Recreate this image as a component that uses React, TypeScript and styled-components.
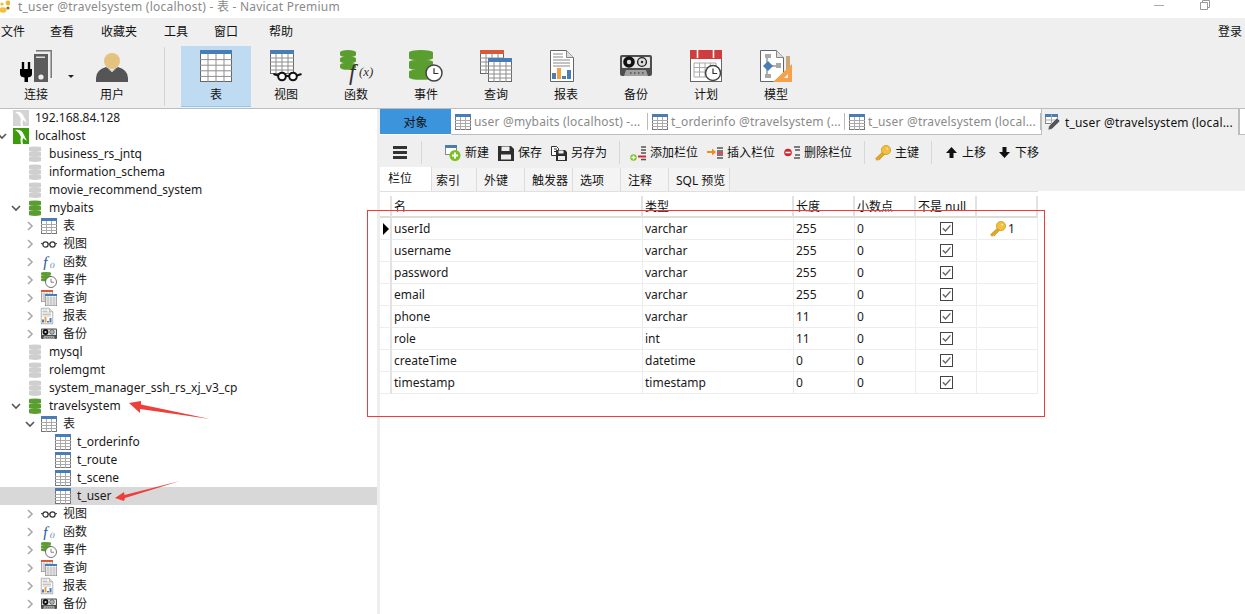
import React from "react";
import styled, { createGlobalStyle } from "styled-components";

const Global = createGlobalStyle`
  html, body { margin: 0; padding: 0; background: #fff; }
  body { font: 12px/16px "Noto Sans", "Noto Sans CJK SC", sans-serif; color: #111; }
  * { box-sizing: border-box; }
`;

const Page = styled.div`
  position: relative;
  width: 1245px;
  height: 614px;
  overflow: hidden;
  display: flex;
  flex-direction: column;
`;
const TitleBar = styled.div`
  height: 18px;
  background: #fff;
  display: flex;
  align-items: flex-start;
`;
const TitleText = styled.span`
  margin-left: 8px;
  font-size: 12px;
  line-height: 13px;
  color: #8a8a8a;
  letter-spacing: 0.22px;
`;
const WindowControls = styled.div`
  margin-left: auto;
  display: flex;
  gap: 36px;
  padding-right: 35px;
`;
const Header = styled.div`
  background: #efefef;
  border-bottom: 1px solid #bdbdbd;
  height: 91px;
`;
const MenuBar = styled.div`
  height: 28px;
  padding: 6px 3px 0 1px;
  display: flex;
`;
const MenuItem = styled.span<{ $w: number }>`
  width: ${(p) => p.$w}px;
`;
const LoginItem = styled.span`
  margin-left: auto;
`;
const Ribbon = styled.div`
  height: 62px;
  display: flex;
`;
const RibbonCell = styled.div<{ $active?: boolean; $w?: number }>`
  position: relative;
  width: ${(p) => p.$w ?? 70}px;
  height: 61px;
  padding-top: 4px;
  display: flex;
  flex-direction: column;
  align-items: center;
  gap: 4px;
  background: ${(p) => (p.$active ? "#bfdbf2" : "transparent")};
  border-bottom: 1px solid ${(p) => (p.$active ? "#90c8f4" : "transparent")};
  line-height: 18px;
`;
const RibbonSep = styled.div`
  width: 1px;
  height: 59px;
  margin: 1px 16px 0 17px;
  background: #d4d4d4;
`;
const Caret = styled.div`
  position: absolute;
  left: 68px;
  top: 29px;
  border-style: solid;
  border-width: 3px 3px 0;
  border-color: #222 transparent transparent;
`;
const ConnectGap = styled.div`
  width: 5px;
`;
const Body = styled.div`
  flex: 1;
  display: flex;
  min-height: 0;
`;
const Tree = styled.div`
  width: 380px;
  border-right: 3px solid #eee;
  overflow: hidden;
`;
const TreeRow = styled.div<{ $selected?: boolean }>`
  height: 18px;
  display: flex;
  align-items: center;
  background: ${(p) => (p.$selected ? "#d8d8d8" : "transparent")};
  white-space: nowrap;
`;
const ChevronSlot = styled.div<{ $level: number }>`
  width: 17px;
  margin-left: ${(p) => p.$level * 14 - 3}px;
  margin-right: -1px;
  flex: none;
  display: flex;
`;
const TreeLabel = styled.span`
  margin-left: 6px;
  color: #1a1a1a;
`;
const Right = styled.div`
  flex: 1;
  min-width: 0;
  display: flex;
  flex-direction: column;
`;
const TabStrip = styled.div`
  height: 26px;
  display: flex;
  background: #fff;
`;
const ObjectTab = styled.div`
  width: 71px;
  height: 25px;
  padding-top: 2px;
  background: #3c94dd;
  display: flex;
  align-items: center;
  justify-content: center;
`;
const DocTab = styled.div<{ $w: number }>`
  width: ${(p) => p.$w}px;
  height: 26px;
  padding: 1px 0 0 4px;
  display: flex;
  align-items: center;
  gap: 3px;
  color: #8a8a8a;
  border-bottom: 1px solid #bdbdbd;
  white-space: nowrap;
  position: relative;
  letter-spacing: 0.18px;
  &::after {
    content: "";
    position: absolute;
    right: 0;
    top: 4px;
    height: 17px;
    width: 1px;
    background: #bbb;
  }
`;
const ActiveTab = styled.div`
  width: 199px;
  height: 26px;
  background: #efefef;
  border-left: 1px solid #bdbdbd;
  border-right: 2px solid #bdbdbd;
  padding: 1px 0 0 3px;
  display: flex;
  align-items: center;
  gap: 3px;
  color: #111;
  white-space: nowrap;
  letter-spacing: 0.18px;
`;
const TabFill = styled.div`
  flex: 1;
  border-bottom: 1px solid #bdbdbd;
`;
const Toolbar = styled.div`
  height: 32px;
  background: #efefef;
  display: flex;
  align-items: center;
  padding: 3px 0 0 13px;
`;
const Burger = styled.div`
  width: 14px;
  height: 13px;
  border-top: 3px solid #333;
  border-bottom: 3px solid #333;
  position: relative;
  &::after {
    content: "";
    position: absolute;
    left: 0;
    right: 0;
    top: 2px;
    height: 3px;
    background: #333;
  }
`;
const ToolSep = styled.div<{ $l: number; $r: number }>`
  width: 1px;
  height: 23px;
  background: #d8d8d8;
  margin-left: ${(p) => p.$l}px;
  margin-right: ${(p) => p.$r}px;
`;
const ToolButton = styled.div<{ $w: number }>`
  width: ${(p) => p.$w}px;
  flex: none;
  display: flex;
  align-items: center;
  gap: 4px;
  white-space: nowrap;
`;
const SubTabs = styled.div`
  height: 24px;
  background: #efefef;
  display: flex;
  align-items: flex-end;
`;
const SubTab = styled.div<{ $w: number; $pad: number; $active?: boolean }>`
  width: ${(p) => p.$w}px;
  height: ${(p) => (p.$active ? 24 : 23)}px;
  padding-left: ${(p) => p.$pad}px;
  padding-top: ${(p) => (p.$active ? 0 : 2)}px;
  display: flex;
  align-items: center;
  background: ${(p) => (p.$active ? "#fff" : "#f4f4f4")};
  border-right: 1px solid #dcdcdc;
  white-space: nowrap;
`;
const Grid = styled.div`
  padding-top: 4px;
  display: grid;
  grid-template-columns: 12px 251px 151px 61px 61px 61px 61px;
  width: 658px;
  border-top: 1px solid #e0e0e0;
`;
const HeadCell = styled.div`
  height: 22px;
  padding-left: 2px;
  line-height: 22px;
  border-right: 2px solid #e2e2e2;
  border-bottom: 2px solid #dcdcdc;
  white-space: nowrap;
  overflow: hidden;
`;
const Cell = styled.div`
  height: 22px;
  padding-left: 2px;
  line-height: 21px;
  border-right: 1px solid #ededed;
  border-bottom: 1px solid #ededed;
  white-space: nowrap;
  color: #1a1a1a;
`;
const MarkerCell = styled(Cell)`
  padding: 5px 0 0 3px;
  border-right: 2px solid #e2e2e2;
`;
const RowPointer = styled.div`
  width: 0;
  height: 0;
  border-style: solid;
  border-width: 6px 0 6px 6px;
  border-color: transparent transparent transparent #000;
`;
const CheckCell = styled(Cell)`
  padding: 0;
  display: flex;
  align-items: center;
  justify-content: center;
`;
const CheckBox = styled.div`
  width: 13px;
  height: 13px;
  border: 1px solid #444;
  background: #fff;
  display: flex;
  align-items: center;
  justify-content: center;
`;
const KeyCell = styled(Cell)`
  padding: 0 0 0 13px;
  display: flex;
  align-items: center;
  gap: 2px;
`;
const RedBox = styled.div`
  position: absolute;
  left: 367px;
  top: 210px;
  width: 678px;
  height: 207px;
  border: 1px solid #f03b3b;
  pointer-events: none;
`;
const ArrowLayer = styled.svg`
  position: absolute;
  left: 0;
  top: 0;
  pointer-events: none;
`;

type IconProps = { size?: number };
const Ic = ({ size = 32, children }: IconProps & { children: React.ReactNode }) => (
  <svg width={size} height={size} viewBox="0 0 32 32" style={{ flex: "none", overflow: "visible", display: "block" }}>
    {children}
  </svg>
);
const Ic16 = ({ children }: { children: React.ReactNode }) => (
  <svg width={16} height={16} viewBox="0 0 16 16" style={{ flex: "none", display: "block" }}>
    {children}
  </svg>
);

const GridLines = ({ x, y, w, h, color = "#8f8f8f", top = "#4a7db5", topH = 4 }: { x: number; y: number; w: number; h: number; color?: string; top?: string; topH?: number }) => {
  const rows = [1, 2, 3, 4].map((i) => y + topH + ((h - topH) * i) / 5);
  const cols = [1, 2, 3].map((i) => x + (w * i) / 4);
  return (
    <g>
      <rect x={x + 0.5} y={y + 0.5} width={w - 1} height={h - 1} fill="#fff" stroke="#666" />
      {rows.map((r) => <line key={r} x1={x} x2={x + w} y1={r} y2={r} stroke={color} />)}
      {cols.map((c) => <line key={c} x1={c} x2={c} y1={y + topH} y2={y + h} stroke={color} />)}
      <rect x={x} y={y} width={w} height={topH} fill={top} />
    </g>
  );
};

const TableIcon = ({ size }: IconProps) => <Ic size={size}><GridLines x={0} y={0} w={32} h={32} /></Ic>;
const SmallTableIcon = () => (
  <Ic16>
    <rect x=".5" y=".5" width="15" height="15" fill="#fff" stroke="#777" />
    <rect width="16" height="3" fill="#4a7db5" />
    <path d="M0 6.5h16M0 9.5h16M0 12.5h16M5.5 3v13M10.5 3v13" stroke="#aaa" />
  </Ic16>
);
const GlassesShape = ({ x, y }: { x: number; y: number }) => (
  <g transform={`translate(${x} ${y})`} fill="none" stroke="#111" strokeWidth="2">
    <circle cx="9" cy="6" r="3.8" fill="#fff" />
    <circle cx="20" cy="6" r="3.8" fill="#fff" />
    <path d="M13 5.500h3M5 5 0.500 3.500M24 5l4.500-1.500" />
  </g>
);
const ViewIcon = ({ size }: IconProps) => (
  <Ic size={size}>
    <GridLines x={0} y={0} w={24} h={24} />
    <GlassesShape x={3} y={20.5} />
  </Ic>
);
const SmallViewIcon = () => (
  <Ic16>
    <g fill="none" stroke="#333" strokeWidth="1.2">
      <circle cx="4.500" cy="8.500" r="2.600" />
      <circle cx="11.500" cy="8.500" r="2.600" />
      <path d="M7 8h2M2 8 0 7.500M14 8l2-.5" />
    </g>
  </Ic16>
);
const Db = ({ x, y, w, h, color }: { x: number; y: number; w: number; h: number; color: string }) => {
  const band = h / 3;
  return (
    <g fill={color}>
      {[0, 1, 2].map((i) => (
        <g key={i}>
          <rect x={x} y={y + i * band + 2} width={w} height={band - 3.2} rx={1} />
          <ellipse cx={x + w / 2} cy={y + i * band + 2.2} rx={w / 2} ry={2.2} />
          <ellipse cx={x + w / 2} cy={y + (i + 1) * band - 1.4} rx={w / 2} ry={2.2} />
        </g>
      ))}
    </g>
  );
};
const DbIcon = ({ on }: { on?: boolean }) => (
  <Ic size={16}>
    <Db x={4} y={1} w={24} h={30} color={on ? "#5a9e2f" : "#cfcfcf"} />
  </Ic>
);
const FuncText = styled.text`
  font-family: "Liberation Serif", serif;
  font-style: italic;
  fill: #333;
`;
const FuncIcon = () => (
  <Ic size={32}>
    <Db x={0} y={0} w={16} h={19} color="#5a9e2f" />
    <FuncText x={9} y={30} fontSize="23">f</FuncText>
    <FuncText x={19} y={26} fontSize="13">(x)</FuncText>
  </Ic>
);
const SmallFuncText = styled.text`
  font-family: "Liberation Serif", serif;
  font-style: italic;
  fill: #2f5f9e;
`;
const SmallFuncIcon = () => (
  <Ic16>
    <SmallFuncText x={2} y={13.5} fontSize="16">f</SmallFuncText>
    <SmallFuncText x={9} y={13} fontSize="7">()</SmallFuncText>
  </Ic16>
);
const Clock = ({ cx, cy, r }: { cx: number; cy: number; r: number }) => (
  <g>
    <circle cx={cx} cy={cy} r={r} fill="#fff" stroke="#444" strokeWidth="1.5" />
    <path d={`M${cx} ${cy - r * 0.6}V${cy + 0.5}H${cx + r * 0.55}`} fill="none" stroke="#333" strokeWidth="1.2" />
  </g>
);
const EventIcon = () => (
  <Ic size={32}>
    <Db x={-1} y={0} w={24} h={29} color="#5a9e2f" />
    <Clock cx={24} cy={23} r={8} />
  </Ic>
);
const SmallEventIcon = () => (
  <Ic size={16}>
    <Db x={0} y={0} w={20} h={18} color="#5a9e2f" />
    <Clock cx={20} cy={20} r={11} />
  </Ic>
);
const QueryIcon = ({ size }: IconProps) => (
  <Ic size={size}>
    <GridLines x={0} y={0} w={24} h={24} top="#d65a3a" />
    <GridLines x={8} y={8} w={24} h={24} />
  </Ic>
);
const ReportIcon = ({ size }: IconProps) => (
  <Ic size={size}>
    <path d="M.5.5h16l7 7v24H.5z" fill="#fff" stroke="#666" />
    <path d="M16.500.5v7h7" fill="#ddd" stroke="#888" />
    <path d="M3 4h10M3 7h10M3 10h17M3 13h17M3 16h17" stroke="#888" />
    <rect x="2" y="23" width="4" height="6" fill="#4a7db5" />
    <rect x="7" y="18" width="4" height="11" fill="#f2a042" />
    <rect x="12" y="26" width="4" height="3" fill="#4a7db5" />
    <rect x="17" y="20" width="4" height="9" fill="#4a7db5" />
  </Ic>
);
const BackupIcon = ({ size }: IconProps) => (
  <Ic size={size}>
    <rect x="0" y="5" width="32" height="21" rx="2" fill="#4e4e4e" />
    <rect x="2" y="7" width="28" height="11" rx="1" fill="#e4e4e4" />
    <circle cx="9" cy="12" r="5.800" fill="#111" />
    <circle cx="9" cy="12" r="2.200" fill="#ddd" />
    <circle cx="22" cy="12" r="4.400" fill="#ddd" stroke="#222" strokeWidth="1.4" />
    <circle cx="22" cy="12" r="1.200" fill="#222" />
    <path d="M4 26l2-6h20l2 6z" fill="#a0a0a0" />
    <path d="M10 23h1.500M14 23h1.500M18 23h1.500M22 23h1.500" stroke="#222" />
  </Ic>
);
const ScheduleIcon = ({ size }: IconProps) => (
  <Ic size={size}>
    <rect x=".5" y=".5" width="31" height="31" fill="#fff" stroke="#666" />
    <rect width="32" height="9" fill="#cf3d3d" />
    <path d="M7.500 0v8M23.500 0v8" stroke="#fff" strokeWidth="1.6" />
    <path d="M4 13h22v14H4zM4 17.500h22M4 22h22M9.500 13v14M15 13v14M20.500 13v14" fill="none" stroke="#aaa" />
    <Clock cx={23} cy={23} r={7.5} />
  </Ic>
);
const ModelIcon = ({ size }: IconProps) => (
  <Ic size={size}>
    <path d="M.5.5h16l7 7v24H.5z" fill="#fff" stroke="#666" />
    <path d="M16.500.5v7h7" fill="#ddd" stroke="#888" />
    <path d="M7 8v18M7 16h12" stroke="#999" strokeWidth="1.5" />
    <rect x="5" y="4" width="6" height="4" fill="#a8a8a8" />
    <rect x="5" y="24" width="6" height="4" fill="#a8a8a8" />
    <rect x="16" y="13" width="5" height="5" fill="#a8a8a8" />
    <path d="M8 11l5 5-5 5-5-5z" fill="#4a7db5" />
    <rect x="26" y="6" width="4" height="14" fill="#c9a878" />
    <path d="M32 14v18H13z" fill="#f5a04a" />
    <path d="M28 24v4h-4z" fill="#efefef" />
  </Ic>
);
const ConnectIcon = () => (
  <Ic size={32}>
    <path d="M16 .8h15.200V28" fill="none" stroke="#777" strokeWidth="1.5" />
    <rect x="14" y="4" width="14" height="28" fill="#5c5c5c" />
    <rect x="16" y="6.500" width="9" height="1.500" fill="#ddd" />
    <circle cx="21" cy="27" r="2.600" fill="#eee" />
    <path d="M3 12v8M9 12v8" stroke="#000" strokeWidth="2.400" />
    <path d="M0 19h12v5q0 3-4 3.500V32H4.500v-4.500Q0 27 0 24z" fill="#000" />
  </Ic>
);
const UserIcon = () => (
  <Ic size={32}>
    <circle cx="16" cy="11" r="8" fill="#e5c27f" />
    <path d="M0 32v-4q0-8 10-11l6 4 6-4q10 3 10 11v4z" fill="#555" />
    <path d="M12 19l4 3 4-3-4 2z" fill="#fff" />
  </Ic>
);
const MySqlIcon = ({ on }: { on?: boolean }) => (
  <Ic16>
    <rect width="16" height="16" fill={on ? "#3b9d0c" : "#d4d4d4"} />
    <path d="M2 2q7-1 9 5l3 6-4-3q-1 2 0 6H8q-1-5 0-7Q6 4 2 2z" fill="#fff" />
  </Ic16>
);
const Chevron = ({ open }: { open?: boolean }) => (
  <svg width={10} height={10} viewBox="0 0 10 10" style={{ display: "block" }}>
    {open ? (
      <path d="M1 3l4 4 4-4" fill="none" stroke="#555" strokeWidth="1.6" />
    ) : (
      <path d="M3 1l4 4-4 4" fill="none" stroke="#aaa" strokeWidth="1.6" />
    )}
  </svg>
);
const KeyIcon = () => (
  <Ic16>
    <path d="M8 6.500.6 13.500l1.300 2 1.400-1.200 1.100.7 1.200-1.600L10 9z" fill="#e3a725" stroke="#b98410" strokeWidth=".5" />
    <circle cx="11" cy="5" r="4.600" fill="#f3bf3c" stroke="#c4901a" strokeWidth=".7" />
    <circle cx="12.200" cy="3.800" r="1" fill="#fbe7a0" />
  </Ic16>
);
const NewIcon = () => (
  <Ic16>
    <rect x=".5" y=".5" width="11" height="9" fill="#fff" stroke="#888" />
    <rect width="12" height="3" fill="#4a7db5" />
    <circle cx="10" cy="10.500" r="5.500" fill="#7ac11e" />
    <path d="M10 7.500v6M7 10.500h6" stroke="#fff" strokeWidth="2" />
  </Ic16>
);
const SaveIcon = () => (
  <Ic16>
    <path d="M0 1h13l3 3v12H0z" fill="#2e2e2e" />
    <rect x="3.500" y="1.500" width="8" height="4.500" fill="#eee" />
    <rect x="3" y="9.500" width="10" height="5" fill="#eee" />
  </Ic16>
);
const SaveAsIcon = () => (
  <Ic16>
    <path d="M.5 1.500h5l2 2v7h-7z" fill="#fff" stroke="#333" />
    <path d="M3 4h3M3 6.500h3" stroke="#333" />
    <path d="M5 5h9l2 2v9H5z" fill="#2e2e2e" />
    <rect x="7.500" y="5.500" width="5" height="3" fill="#eee" />
    <rect x="7" y="11" width="7" height="4" fill="#eee" />
  </Ic16>
);
const AddColIcon = () => (
  <Ic16>
    <path d="M11 2h5M11 5h5M11 8h5" stroke="#555" strokeWidth="1.6" />
    <path d="M8 11.500h8" stroke="#e0202a" strokeWidth="2" />
    <path d="M11 14.500h5" stroke="#555" strokeWidth="1.6" />
    <circle cx="3.500" cy="12.500" r="3.200" fill="#7ac11e" />
    <path d="M3.500 10.500v4M1.500 12.500h4" stroke="#fff" strokeWidth="1.300" />
  </Ic16>
);
const InsertColIcon = () => (
  <Ic16>
    <path d="M10 3h6M10 6h6M10 10h6M10 13h6" stroke="#555" strokeWidth="1.6" />
    <path d="M0 7h6" stroke="#f28a1e" strokeWidth="2" />
    <path d="M5 3.500 9 7l-4 3.500z" fill="#f28a1e" />
    <path d="M10 8h6" stroke="#e0202a" strokeWidth="1.6" />
  </Ic16>
);
const DeleteColIcon = () => (
  <Ic16>
    <path d="M10 2h6M11 5h5M11 10h5M10 13h6" stroke="#555" strokeWidth="1.6" />
    <circle cx="4" cy="7.500" r="3.800" fill="#d8202c" />
    <path d="M1.500 7.500h5" stroke="#fff" strokeWidth="1.6" />
  </Ic16>
);
const ArrowIcon = ({ down }: { down?: boolean }) => (
  <svg width={13} height={13} viewBox="0 0 13 13" style={{ flex: "none", display: "block" }}>
    <path d={down ? "M4.500 1h4v5H12L6.500 12 1 6h3.500z" : "M6.500 1 12 7H8.500v5h-4V7H1z"} fill="#111" />
  </svg>
);
const EditTabIcon = () => (
  <svg width={17} height={17} viewBox="0 0 17 17" style={{ flex: "none", display: "block" }}>
    <rect x=".5" y=".5" width="12" height="9" fill="#fff" stroke="#888" />
    <rect width="13" height="3" fill="#4a7db5" />
    <path d="M6.500 .5v9M.5 6h12" stroke="#aaa" />
    <path d="M3 16l1-4 8-8 3 3-8 8-4 1z" fill="#555" stroke="#eee" strokeWidth=".5" />
  </svg>
);
const CheckMark = () => (
  <svg width={9} height={9} viewBox="0 0 9 9" style={{ display: "block" }}>
    <path d="M.8 4.200 3.500 7 8.400 1.400" fill="none" stroke="#666" strokeWidth="1.400" />
  </svg>
);
const MinimizeGlyph = () => (
  <svg width={10} height={10} viewBox="0 0 10 10" style={{ display: "block" }}>
    <path d="M0 5.500h10" stroke="#aaa" />
  </svg>
);
const RestoreGlyph = () => (
  <svg width={10} height={10} viewBox="0 0 10 10" style={{ display: "block" }}>
    <path d="M.5 2.500h7v7h-7zM2.500 2.500v-2h7v7h-2" fill="none" stroke="#999" />
  </svg>
);
const AppLogo = () => (
  <svg width={10} height={13} viewBox="0 0 10 13" style={{ flex: "none", display: "block" }}>
    <ellipse cx="3" cy="10" rx="3.600" ry="2.800" fill="#f0c040" />
    <circle cx="8" cy="3" r="2.400" fill="#e8b93a" />
    <circle cx="8" cy="8" r="1.600" fill="#8a6d2a" />
    <circle cx="2" cy="4" r="1.600" fill="#e8b93a" />
  </svg>
);

type TreeNode = { label: string; level: number; icon: React.ReactNode; chevron?: "open" | "closed"; selected?: boolean };
const objectNodes: TreeNode[] = [
  { label: "视图", level: 2, icon: <SmallViewIcon />, chevron: "closed" },
  { label: "函数", level: 2, icon: <SmallFuncIcon />, chevron: "closed" },
  { label: "事件", level: 2, icon: <SmallEventIcon />, chevron: "closed" },
  { label: "查询", level: 2, icon: <QueryIcon size={16} />, chevron: "closed" },
  { label: "报表", level: 2, icon: <ReportIcon size={16} />, chevron: "closed" },
  { label: "备份", level: 2, icon: <BackupIcon size={16} />, chevron: "closed" },
];
const treeData: TreeNode[] = [
  { label: "192.168.84.128", level: 0, icon: <MySqlIcon /> },
  { label: "localhost", level: 0, icon: <MySqlIcon on />, chevron: "open" },
  { label: "business_rs_jntq", level: 1, icon: <DbIcon /> },
  { label: "information_schema", level: 1, icon: <DbIcon /> },
  { label: "movie_recommend_system", level: 1, icon: <DbIcon /> },
  { label: "mybaits", level: 1, icon: <DbIcon on />, chevron: "open" },
  { label: "表", level: 2, icon: <SmallTableIcon />, chevron: "closed" },
  ...objectNodes,
  { label: "mysql", level: 1, icon: <DbIcon /> },
  { label: "rolemgmt", level: 1, icon: <DbIcon /> },
  { label: "system_manager_ssh_rs_xj_v3_cp", level: 1, icon: <DbIcon /> },
  { label: "travelsystem", level: 1, icon: <DbIcon on />, chevron: "open" },
  { label: "表", level: 2, icon: <SmallTableIcon />, chevron: "open" },
  { label: "t_orderinfo", level: 3, icon: <SmallTableIcon /> },
  { label: "t_route", level: 3, icon: <SmallTableIcon /> },
  { label: "t_scene", level: 3, icon: <SmallTableIcon /> },
  { label: "t_user", level: 3, icon: <SmallTableIcon />, selected: true },
  ...objectNodes,
];

const ribbon: { label: string; icon: React.ReactNode; active?: boolean }[] = [
  { label: "表", icon: <TableIcon />, active: true },
  { label: "视图", icon: <ViewIcon /> },
  { label: "函数", icon: <FuncIcon /> },
  { label: "事件", icon: <EventIcon /> },
  { label: "查询", icon: <QueryIcon /> },
  { label: "报表", icon: <ReportIcon /> },
  { label: "备份", icon: <BackupIcon /> },
  { label: "计划", icon: <ScheduleIcon /> },
  { label: "模型", icon: <ModelIcon /> },
];
const menus: [string, number][] = [["文件", 49], ["查看", 51], ["收藏夹", 63], ["工具", 50], ["窗口", 55], ["帮助", 24]];
const subTabs: [string, number, number][] = [["栏位", 52, 8], ["索引", 45, 4], ["外键", 48, 7], ["触发器", 48, 7], ["选项", 48, 7], ["注释", 48, 7], ["SQL 预览", 61, 7]];
const fields: [string, string, string][] = [
  ["userId", "varchar", "255"],
  ["username", "varchar", "255"],
  ["password", "varchar", "255"],
  ["email", "varchar", "255"],
  ["phone", "varchar", "11"],
  ["role", "int", "11"],
  ["createTime", "datetime", "0"],
  ["timestamp", "timestamp", "0"],
];
const columns = ["", "名", "类型", "长度", "小数点", "不是 null", ""];

export default function App() {
  return (
    <Page>
      <Global />
      <TitleBar>
        <AppLogo />
        <TitleText>t_user @travelsystem (localhost) - 表 - Navicat Premium</TitleText>
        <WindowControls>
          <MinimizeGlyph />
          <RestoreGlyph />
        </WindowControls>
      </TitleBar>
      <Header>
        <MenuBar>
          {menus.map(([m, w]) => <MenuItem key={m} $w={w}>{m}</MenuItem>)}
          <LoginItem>登录</LoginItem>
        </MenuBar>
        <Ribbon>
          <RibbonCell $w={72}><ConnectIcon />连接<Caret /></RibbonCell>
          <ConnectGap />
          <RibbonCell><UserIcon />用户</RibbonCell>
          <RibbonSep />
          {ribbon.map((r) => <RibbonCell key={r.label} $active={r.active}>{r.icon}{r.label}</RibbonCell>)}
        </Ribbon>
      </Header>
      <Body>
        <Tree>
          {treeData.map((n, i) => (
            <TreeRow key={i} $selected={n.selected}>
              <ChevronSlot $level={n.level}>{n.chevron ? <Chevron open={n.chevron === "open"} /> : null}</ChevronSlot>
              {n.icon}
              <TreeLabel>{n.label}</TreeLabel>
            </TreeRow>
          ))}
        </Tree>
        <Right>
          <TabStrip>
            <div><ObjectTab>对象</ObjectTab></div>
            <DocTab $w={197}><SmallTableIcon />user @mybaits (localhost) -...</DocTab>
            <DocTab $w={197}><SmallTableIcon />t_orderinfo @travelsystem (...</DocTab>
            <DocTab $w={196}><SmallTableIcon />t_user @travelsystem (local...</DocTab>
            <ActiveTab><EditTabIcon />t_user @travelsystem (local...</ActiveTab>
            <TabFill />
          </TabStrip>
          <Toolbar>
            <Burger />
            <ToolSep $l={14} $r={23} />
            <ToolButton $w={53}><NewIcon />新建</ToolButton>
            <ToolButton $w={53}><SaveIcon />保存</ToolButton>
            <ToolButton $w={68}><SaveAsIcon />另存为</ToolButton>
            <ToolSep $l={0} $r={10} />
            <ToolButton $w={77}><AddColIcon />添加栏位</ToolButton>
            <ToolButton $w={77}><InsertColIcon />插入栏位</ToolButton>
            <ToolButton $w={80}><DeleteColIcon />删除栏位</ToolButton>
            <ToolSep $l={0} $r={10} />
            <ToolButton $w={56}><KeyIcon />主键</ToolButton>
            <ToolSep $l={0} $r={13} />
            <ToolButton $w={53}><ArrowIcon />上移</ToolButton>
            <ToolButton $w={53}><ArrowIcon down />下移</ToolButton>
          </Toolbar>
          <SubTabs>
            {subTabs.map(([t, w, pad], i) => <SubTab key={t} $w={w} $pad={pad} $active={i === 0}>{t}</SubTab>)}
          </SubTabs>
          <Grid>
            {columns.map((c, i) => <HeadCell key={i}>{c}</HeadCell>)}
            {fields.map(([name, type, len], i) => (
              <React.Fragment key={name}>
                <MarkerCell>{i === 0 ? <RowPointer /> : null}</MarkerCell>
                <Cell>{name}</Cell>
                <Cell>{type}</Cell>
                <Cell>{len}</Cell>
                <Cell>0</Cell>
                <CheckCell><CheckBox><CheckMark /></CheckBox></CheckCell>
                {i === 0 ? <KeyCell><KeyIcon />1</KeyCell> : <Cell />}
              </React.Fragment>
            ))}
          </Grid>
        </Right>
      </Body>
      <RedBox />
      <ArrowLayer width={1245} height={614} viewBox="0 0 1245 614">
        <path d="M129 403 141 401 141 404.500 210 419 140 409 140 413z" fill="#ee3f3a" />
        <path d="M115 498 124 492 124.500 495 180 481 125 498 124 501z" fill="#ee3f3a" />
      </ArrowLayer>
    </Page>
  );
}
